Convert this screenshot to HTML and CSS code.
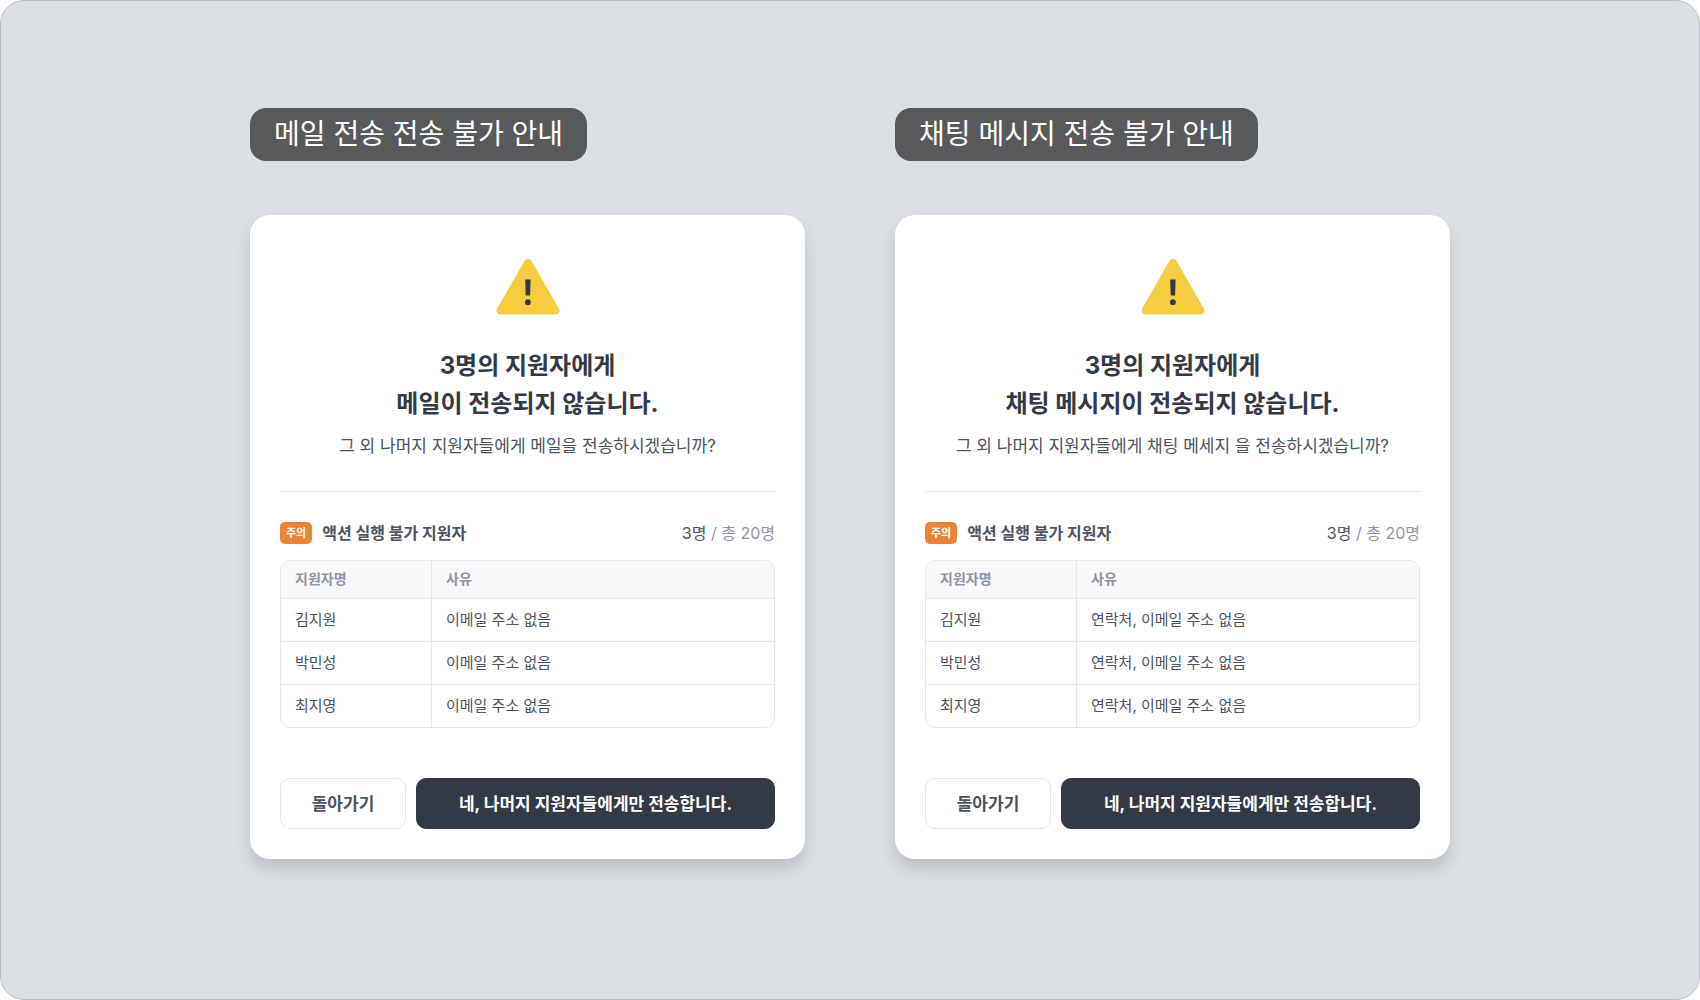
FILE: index.html
```html
<!DOCTYPE html>
<html lang="ko">
<head>
   <meta charset="UTF-8">
   <title>전송 불가 안내</title>
   <meta name="viewport" content="width=device-width, initial-scale=1.0">
   <link rel="stylesheet" href="styles.css">
</head>
<body>
   <main class="board">
      <div class="columns">
         <section class="column">
            <h1 class="label">메일 전송 전송 불가 안내</h1>
            <div class="card" role="dialog" aria-labelledby="mail-title">
               <svg class="warning-icon" viewBox="0 0 64 56" aria-hidden="true">
                  <path fill="#f6cc41" d="M28.3 2.3a4.2 4.2 0 0 1 7.4 0l27.2 47.2a4 4 0 0 1-3.5 6H4.6a4 4 0 0 1-3.5-6z"/>
                  <path fill="#343a45" d="M29.2 20.5h5.4l-.5 16h-4.4z"/>
                  <circle fill="#343a45" cx="31.9" cy="43.2" r="2.9"/>
               </svg>
               <h2 class="title" id="mail-title">3명의 지원자에게<br>메일이 전송되지 않습니다.</h2>
               <p class="question">그 외 나머지 지원자들에게 메일을 전송하시겠습니까?</p>
               <div class="list-header">
                  <span class="badge">주의</span>
                  <h3 class="list-title">액션 실행 불가 지원자</h3>
                  <span class="count"><span class="count-now">3명</span> / 총 20명</span>
               </div>
               <table class="list">
                  <thead>
                     <tr><th class="name">지원자명</th><th>사유</th></tr>
                  </thead>
                  <tbody>
                     <tr><td>김지원</td><td>이메일 주소 없음</td></tr>
                     <tr><td>박민성</td><td>이메일 주소 없음</td></tr>
                     <tr><td>최지영</td><td>이메일 주소 없음</td></tr>
                  </tbody>
               </table>
               <div class="buttons">
                  <button type="button" class="button">돌아가기</button>
                  <button type="button" class="button button-primary">네, 나머지 지원자들에게만 전송합니다.</button>
               </div>
            </div>
         </section>

         <section class="column">
            <h1 class="label">채팅 메시지 전송 불가 안내</h1>
            <div class="card" role="dialog" aria-labelledby="chat-title">
               <svg class="warning-icon" viewBox="0 0 64 56" aria-hidden="true">
                  <path fill="#f6cc41" d="M28.3 2.3a4.2 4.2 0 0 1 7.4 0l27.2 47.2a4 4 0 0 1-3.5 6H4.6a4 4 0 0 1-3.5-6z"/>
                  <path fill="#343a45" d="M29.2 20.5h5.4l-.5 16h-4.4z"/>
                  <circle fill="#343a45" cx="31.9" cy="43.2" r="2.9"/>
               </svg>
               <h2 class="title" id="chat-title">3명의 지원자에게<br>채팅 메시지이 전송되지 않습니다.</h2>
               <p class="question">그 외 나머지 지원자들에게 채팅 메세지 을 전송하시겠습니까?</p>
               <div class="list-header">
                  <span class="badge">주의</span>
                  <h3 class="list-title">액션 실행 불가 지원자</h3>
                  <span class="count"><span class="count-now">3명</span> / 총 20명</span>
               </div>
               <table class="list">
                  <thead>
                     <tr><th class="name">지원자명</th><th>사유</th></tr>
                  </thead>
                  <tbody>
                     <tr><td>김지원</td><td>연락처, 이메일 주소 없음</td></tr>
                     <tr><td>박민성</td><td>연락처, 이메일 주소 없음</td></tr>
                     <tr><td>최지영</td><td>연락처, 이메일 주소 없음</td></tr>
                  </tbody>
               </table>
               <div class="buttons">
                  <button type="button" class="button">돌아가기</button>
                  <button type="button" class="button button-primary">네, 나머지 지원자들에게만 전송합니다.</button>
               </div>
            </div>
         </section>
      </div>
   </main>
</body>
</html>
```
FILE: styles.css
```css
* {
   box-sizing: border-box;
}
body {
   margin: 0;
   background-color: #fff;
   color: #4d5360;
   font-family: Inter, "Noto Sans CJK KR", sans-serif;
}
h1, h2, h3, p {
   margin: 0;
}
.board {
   min-height: 100vh;
   padding: 107px 40px 60px;
   background-color: #dce0e5;
   border: 1px solid #b9bec9;
   border-radius: 24px;
}
.columns {
   display: flex;
   flex-wrap: wrap;
   gap: 54px 90px;
   max-width: 1200px;
   margin: 0 auto;
}
.column {
   flex: 1 1 440px;
   display: flex;
   flex-direction: column;
   align-items: flex-start;
   gap: 54px;
}
.label {
   padding: 0 24px;
   border-radius: 16px;
   background-color: #58595b;
   color: #fff;
   font-size: 28px;
   font-weight: 400;
   line-height: 53px;
}
.card {
   display: flex;
   flex-direction: column;
   width: 100%;
   padding: 44px 30px 30px;
   background-color: #fff;
   border-radius: 20px;
   box-shadow: 0 10px 16px rgba(0, 0, 0, 0.14);
}
.warning-icon {
   width: 64px;
   height: 56px;
   align-self: center;
}
.title {
   margin-top: 32px;
   color: #343a45;
   font-size: 24px;
   font-weight: 700;
   line-height: 38px;
   text-align: center;
}
.question {
   padding: 10px 0 32px;
   border-bottom: 1px solid #e5e7eb;
   font-size: 17px;
   line-height: 26px;
   text-align: center;
}

/* table */
.list-header {
   display: flex;
   align-items: center;
   margin: 30px 0 16px;
   font-size: 16px;
   line-height: 22px;
}
.badge {
   padding: 0 6px;
   border-radius: 5px;
   background-color: #ed8336;
   color: #fff;
   font-size: 11px;
   font-weight: 700;
}
.list-title {
   margin-left: 10px;
   font-size: 16px;
   font-weight: 700;
}
.count {
   margin-left: auto;
   color: #8e94a3;
}
.count-now {
   color: #4d5360;
}
.list {
   width: 100%;
   border: 1px solid #e5e7eb;
   border-radius: 10px;
   border-spacing: 0;
   overflow: hidden;
   text-align: left;
}
.list th {
   height: 37px;
   padding: 0 14px 3px;
   background-color: #f8f8fb;
   color: #8e94a3;
   font-size: 14px;
   font-weight: 700;
}
.list td {
   height: 43px;
   padding: 0 14px 3px;
   border-top: 1px solid #e5e7eb;
   font-size: 15px;
}
.list .name {
   width: 151px;
}
.list tr > :first-child {
   border-right: 1px solid #e5e7eb;
}

.buttons {
   display: flex;
   gap: 10px;
   margin-top: 50px;
}
.button {
   flex: 0 0 auto;
   width: 126px;
   height: 51px;
   padding: 0 0 3px;
   border: 1px solid #e5e7eb;
   border-radius: 10px;
   background-color: #fff;
   color: #4d5360;
   font-family: inherit;
   font-size: 17px;
   font-weight: 700;
   cursor: pointer;
}
.button-primary {
   flex: 1;
   border-color: #343a45;
   background-color: #343a45;
   color: #fff;
}
```
